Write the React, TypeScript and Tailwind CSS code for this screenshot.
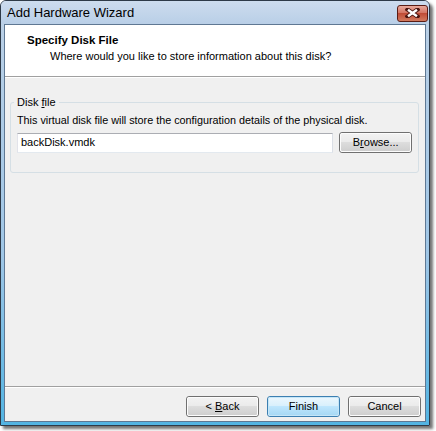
import React from "react";

const font = { fontFamily: '"Liberation Sans", Arial, sans-serif' };

function WinButton({ children, primary }: { children: React.ReactNode; primary?: boolean }) {
  return (
    <div
      className={
        "w-[73px] h-[21px] rounded-[3px] border " +
        (primary ? "border-[#3c7fb1]" : "border-[#707070]")
      }
    >
      <div
        className={
          "h-full rounded-[2px] flex items-center justify-center text-[11px] text-black whitespace-pre " +
          (primary
            ? "bg-[linear-gradient(to_bottom,#eaf6fd_0%,#d9f0fc_45%,#bee6fd_50%,#a7d9f5_100%)] border border-[#c5e6f8]"
            : "bg-[linear-gradient(to_bottom,#f2f2f2_0%,#ebebeb_45%,#dddddd_50%,#cfcfcf_100%)] border border-[#fcfcfc]")
        }
      >
        {children}
      </div>
    </div>
  );
}

function CloseIcon() {
  return (
    <svg width="15" height="10" viewBox="0 0 15 10">
      <path d="M2.5 1.5 L12.5 8.5 M12.5 1.5 L2.5 8.5" stroke="#4a1510" strokeWidth="4.2" strokeLinecap="square" />
      <path d="M3 1.8 L12 8.2 M12 1.8 L3 8.2" stroke="#ffffff" strokeWidth="2.4" strokeLinecap="butt" />
    </svg>
  );
}

export default function App() {
  return (
    <div className="w-[436px] h-[431px] bg-white" style={font}>
      <div className="w-[430px] h-[426px] border border-[#2e3a48] rounded-t-[6px] bg-[linear-gradient(to_bottom,#c4d6eb_0%,#b8cfe6_8%,#9fc6e6_60%,#52b4e3_100%)] shadow-[3px_3px_3px_rgba(0,0,0,0.55)] flex flex-col">
        {/* title bar */}
        <div className="h-[23px] flex items-center justify-between pl-[6px] pr-[1px] bg-[linear-gradient(to_bottom,#cddcee,#b9cfe7)] rounded-t-[5px]">
          <span className="text-[13px] text-black mt-[1px]">Add Hardware Wizard</span>
          <div className="w-[31px] h-[17px] mt-[1px] rounded-[3px] border border-[#5a1c14] bg-[linear-gradient(to_bottom,#e9a99c_0%,#d47664_45%,#c04c36_50%,#d27a5e_100%)] flex items-center justify-center">
            <CloseIcon />
          </div>
        </div>
        {/* client */}
        <div className="flex-1 mx-[3px] mb-[3px] border border-[#5f7893] bg-[#f0f0f0] flex flex-col">
          <div className="h-[52px] bg-white border-b border-[#a0a0a0] pt-[7px]">
            <div className="pl-[22px] text-[11.5px] font-bold text-black leading-[16px]">Specify Disk File</div>
            <div className="pl-[45px] text-[11px] text-black leading-[16px]">
              Where would you like to store information about this disk?
            </div>
          </div>
          <div className="border-t border-white flex-1 flex flex-col px-[4px]">
            <div className="mt-[24px] ml-[1px] mr-[2px] relative rounded-[3px] border border-[#d5dfe5] h-[71px] pl-[6px] pr-[6px]">
              <div className="absolute -top-[9px] left-[3px] px-[3px] bg-[#f0f0f0] text-[11px] leading-[16px] text-black">
                Disk <span className="underline">f</span>ile
              </div>
              <div className="mt-[9px] text-[10.8px] leading-[16px] text-black">
                This virtual disk file will store the configuration details of the physical disk.
              </div>
              <div className="mt-[4px] flex items-center gap-[6px]">
                <div className="w-[318px] h-[20px] bg-white border border-[#abadb3] border-l-[#e2e3ea] border-r-[#dbdfe6] border-b-[#e3e9ef] flex items-center pl-[3px] text-[11px] text-black">
                  backDisk.vmdk
                </div>
                <WinButton>
                  B<span className="underline">r</span>owse...
                </WinButton>
              </div>
            </div>
            <div className="flex-1" />
            <div className="-mx-[4px] border-t border-[#a0a0a0] border-b border-b-white" />
            <div className="flex justify-end gap-[8px] pt-[8px] pb-[4px]">
              <WinButton>
                {"< "}
                <span className="underline">B</span>ack
              </WinButton>
              <WinButton primary>Finish</WinButton>
              <WinButton>Cancel</WinButton>
            </div>
          </div>
        </div>
      </div>
    </div>
  );
}
